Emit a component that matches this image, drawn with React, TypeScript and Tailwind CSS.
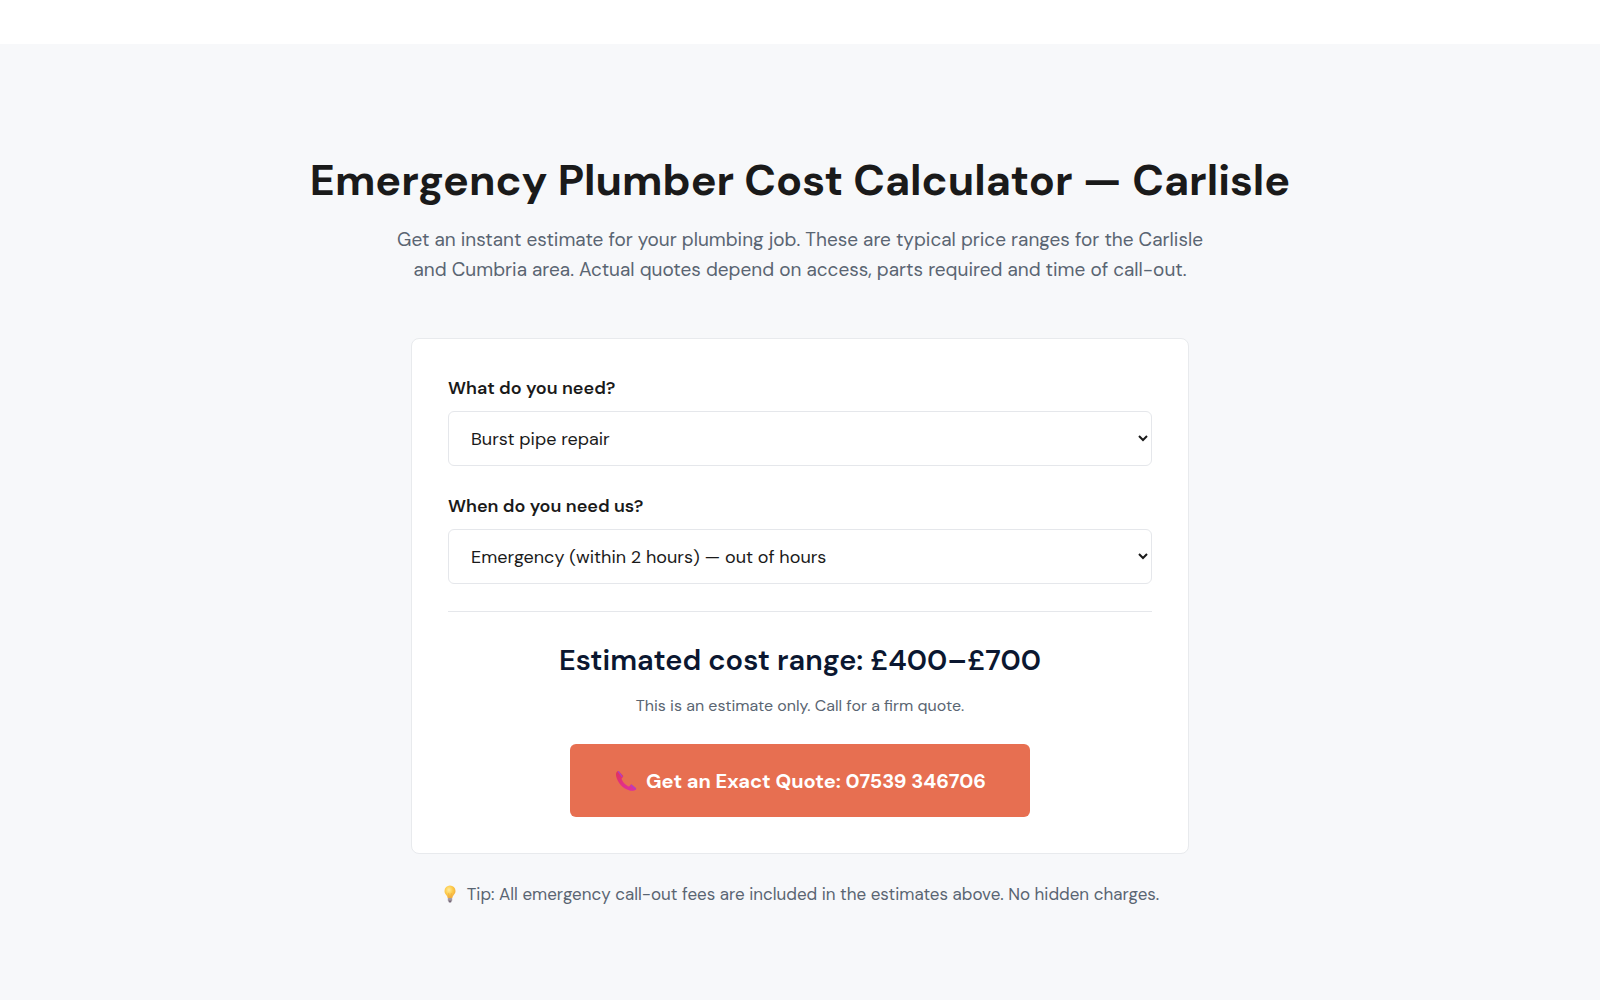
import { useState } from "react";

type Range = [number, number];

const services: { name: string; range: Range }[] = [
  { name: "Burst pipe repair", range: [200, 350] },
  { name: "Blocked drain", range: [100, 200] },
  { name: "Boiler repair", range: [150, 300] },
  { name: "Leaking tap", range: [80, 140] },
];

const timings: { name: string; factor: number }[] = [
  { name: "Emergency (within 2 hours) — out of hours", factor: 2 },
  { name: "Same day", factor: 1.5 },
  { name: "Scheduled", factor: 1 },
];

function PhoneIcon() {
  return (
    <svg viewBox="0 0 24 24" className="h-6 w-6 shrink-0" aria-hidden="true">
      <defs>
        <linearGradient id="handset" x1="0" y1="0" x2="1" y2="1">
          <stop offset="0" stopColor="#e0335c" />
          <stop offset="0.5" stopColor="#e22f86" />
          <stop offset="1" stopColor="#d92fa6" />
        </linearGradient>
      </defs>
      <path
        d="M3.600 2.200C2 3 1.600 5 2.200 7.600c1.400 6.300 6.800 12.300 13.300 13.900 2.600.6 5.300.3 6.600-1.100.4-.5.3-1-.2-1.500l-3.600-3c-.6-.5-1.300-.4-1.800 0l-.9 1.100c-.4.5-1 .5-1.600.2-3-1.600-5.200-4.200-6.300-7-.2-.6 0-1 .4-1.300l.7-.6c.5-.4.6-1.100.2-1.700L5.100 2.600c-.4-.5-.9-.6-1.500-.4z"
        fill="url(#handset)"
      />
      <path d="M4.400 2.700l3.500 4.600M17.300 16.300l4 3.300" stroke="#b044bd" strokeWidth="1.400" strokeLinecap="round" />
    </svg>
  );
}

function BulbIcon() {
  return (
    <svg viewBox="0 0 18 18" className="h-[18px] w-[18px] shrink-0" aria-hidden="true">
      <defs>
        <radialGradient id="glow" cx="0.4" cy="0.35" r="0.7">
          <stop offset="0" stopColor="#ffeb9a" />
          <stop offset="0.5" stopColor="#fdcb4b" />
          <stop offset="1" stopColor="#f2a93a" />
        </radialGradient>
      </defs>
      <path
        d="M9 .5a5.500 5.500 0 0 0-5.500 5.500c0 2 1 3.300 2.100 4.600.6.9 1 1.700 1.100 2.600h4.600c.1-.9.5-1.700 1.100-2.600 1-1.300 2.100-2.600 2.100-4.600A5.500 5.500 0 0 0 9 .5z"
        fill="url(#glow)"
      />
      <path d="M7.600 8.200l.7 4.600M10.400 8.200l-.7 4.600" stroke="#e8a23f" strokeWidth=".6" />
      <rect x="6.800" y="13" width="4.400" height="3.200" rx=".8" fill="#a39ba3" />
      <rect x="7.600" y="15.600" width="2.800" height="1.900" rx=".8" fill="#77697a" />
    </svg>
  );
}

function Field({
  id,
  label,
  options,
  value,
  onChange,
}: {
  id: string;
  label: string;
  options: string[];
  value: number;
  onChange: (index: number) => void;
}) {
  return (
    <div className="mb-[27px]">
      <label htmlFor={id} className="mb-2.5 block text-[18px] leading-[26px] font-semibold text-[#1a1a1a]">
        {label}
      </label>
      <select
        id={id}
        value={value}
        onChange={(e) => onChange(Number(e.target.value))}
        className="block h-[55px] w-full rounded-md border border-[#e5e7eb] bg-white px-[18px] text-[18px] text-[#1a1a1a]"
      >
        {options.map((option, i) => (
          <option key={option} value={i}>
            {option}
          </option>
        ))}
      </select>
    </div>
  );
}

export default function App() {
  const [service, setService] = useState(0);
  const [timing, setTiming] = useState(0);
  const [low, high] = services[service].range.map((n) => n * timings[timing].factor);

  return (
    <div className="min-h-screen bg-white pt-11 font-['DM_Sans','Inter',sans-serif]">
      <section className="min-h-[calc(100vh-44px)] bg-[#f7f8fa] px-6 pt-[105px] pb-20">
        <h1 className="text-center text-[43px] leading-[62px] font-bold text-[#1a1a1a]">
          Emergency Plumber Cost Calculator — Carlisle
        </h1>
        <p className="mx-auto mt-3.5 max-w-[820px] text-center text-[19px] leading-[30px] text-[#5a6572]">
          Get an instant estimate for your plumbing job. These are typical price ranges for the Carlisle and Cumbria
          area. Actual quotes depend on access, parts required and time of call-out.
        </p>

        <div className="mx-auto mt-[53px] max-w-[778px] rounded-lg border border-[#e8eaed] bg-white p-9">
          <Field
            id="service"
            label="What do you need?"
            options={services.map((s) => s.name)}
            value={service}
            onChange={setService}
          />
          <Field
            id="timing"
            label="When do you need us?"
            options={timings.map((t) => t.name)}
            value={timing}
            onChange={setTiming}
          />
          <div className="border-t border-[#e5e7eb] pt-6 text-center">
            <p className="text-[29px] leading-[48px] font-semibold text-[#0b1730]">
              Estimated cost range: £{low}–£{high}
            </p>
            <p className="mt-2 text-[16px] leading-7 text-[#5a6572]">This is an estimate only. Call for a firm quote.</p>
            <a
              href="tel:07539346706"
              className="mt-6 inline-flex h-[73px] items-center gap-2 rounded-md bg-[#e76f51] px-11 text-[20px] font-bold text-white"
            >
              <PhoneIcon />
              Get an Exact Quote: 07539 346706
            </a>
          </div>
        </div>

        <p className="mt-[26px] flex items-center justify-center gap-2 text-[17px] leading-7 text-[#5a6572]">
          <BulbIcon />
          Tip: All emergency call-out fees are included in the estimates above. No hidden charges.
        </p>
      </section>
    </div>
  );
}
